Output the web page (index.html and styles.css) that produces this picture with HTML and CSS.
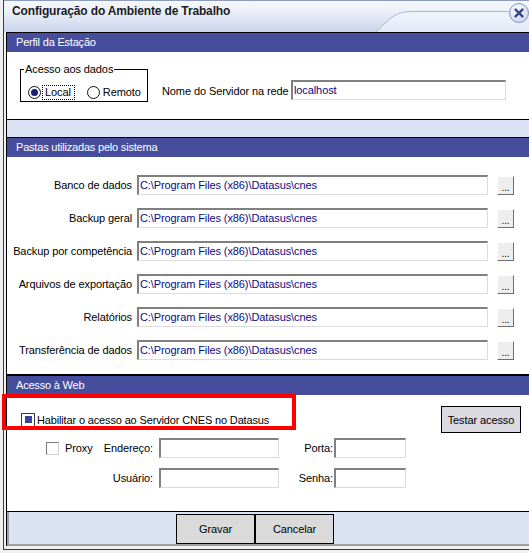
FILE: index.html
```html
<!DOCTYPE html>
<html lang="pt">
<head>
<meta charset="utf-8">
<title>Configuração do Ambiente de Trabalho</title>
<link rel="stylesheet" href="styles.css">
</head>
<body>
<div class="artifact-pink"></div>
<div class="window">
  <div class="titlebar">
    <svg class="tb-curve" width="525" height="31" viewBox="0 0 525 31">
      <defs>
        <linearGradient id="tbr" x1="0" y1="0" x2="0" y2="1">
          <stop offset="0" stop-color="#f1f4fa"/>
          <stop offset="1" stop-color="#e2e8f5"/>
        </linearGradient>
      </defs>
      <path d="M372 31 C 388 14 394 10.5 410 10.5 L 525 10.5 L 525 31 Z" fill="url(#tbr)" stroke="none"/>
      <path d="M372 31 C 388 14 394 10.5 410 10.5 L 505 10.5" fill="none" stroke="#a9b7d6" stroke-width="1"/>
    </svg>
    <span class="title">Configuração do Ambiente de Trabalho</span>
    <svg class="close" width="22" height="22" viewBox="0 0 22 22">
      <defs>
        <radialGradient id="cbg" cx="0.4" cy="0.35" r="0.7">
          <stop offset="0" stop-color="#ffffff"/>
          <stop offset="1" stop-color="#c9d4ec"/>
        </radialGradient>
      </defs>
      <circle cx="11" cy="11" r="9.5" fill="url(#cbg)" stroke="#8594c4" stroke-width="1"/>
      <path d="M7.6 7.6 L14.4 14.4 M14.4 7.6 L7.6 14.4" stroke="#34468a" stroke-width="2.4" stroke-linecap="round"/>
    </svg>
  </div>
  <div class="frame">
    <div class="content">
      <section class="panel">
        <div class="phead">Perfil da Estação</div>
        <div class="pbody p1">
          <div class="group">
            <span class="legend">Acesso aos dados</span>
            <span class="radio on"></span>
            <span class="focus">Local</span>
            <span class="radio r2"></span>
            <span class="rlabel">Remoto</span>
          </div>
          <span class="srv-label">Nome do Servidor na rede</span>
          <div class="input srv">localhost</div>
        </div>
      </section>
      <div class="gap"></div>
      <section class="panel">
        <div class="phead">Pastas utilizadas pelo sistema</div>
        <div class="pbody p2">
          <div class="row"><span class="plabel">Banco de dados</span><div class="input path">C:\Program Files (x86)\Datasus\cnes</div><span class="dots">...</span></div>
          <div class="row"><span class="plabel">Backup geral</span><div class="input path">C:\Program Files (x86)\Datasus\cnes</div><span class="dots">...</span></div>
          <div class="row"><span class="plabel">Backup por competência</span><div class="input path">C:\Program Files (x86)\Datasus\cnes</div><span class="dots">...</span></div>
          <div class="row"><span class="plabel">Arquivos de exportação</span><div class="input path">C:\Program Files (x86)\Datasus\cnes</div><span class="dots">...</span></div>
          <div class="row"><span class="plabel">Relatórios</span><div class="input path">C:\Program Files (x86)\Datasus\cnes</div><span class="dots">...</span></div>
          <div class="row"><span class="plabel">Transferência de dados</span><div class="input path">C:\Program Files (x86)\Datasus\cnes</div><span class="dots">...</span></div>
        </div>
      </section>
      <section class="panel p3panel">
        <div class="phead">Acesso à Web</div>
        <div class="pbody p3">
          <div class="highlight"></div>
          <div class="rowa">
            <span class="check on"><span class="mark"></span></span>
            <span class="check-label">Habilitar o acesso ao Servidor CNES no Datasus</span>
            <span class="btn testar">Testar acesso</span>
          </div>
          <div class="rowb">
            <div class="first">
              <span class="check off"></span>
              <span class="proxy">Proxy</span>
              <span class="endereco">Endereço:</span>
            </div>
            <div class="input wide"></div>
            <span class="lbl54">Porta:</span>
            <div class="input narrow"></div>
          </div>
          <div class="rowc">
            <span class="lbl146">Usuário:</span>
            <div class="input wide"></div>
            <span class="lbl54">Senha:</span>
            <div class="input narrow"></div>
          </div>
        </div>
      </section>
      <div class="footer">
        <span class="btn fbtn">Gravar</span><span class="btn fbtn">Cancelar</span>
      </div>
    </div>
  </div>
</div>
</body>
</html>
```

FILE: styles.css
```css
* { box-sizing: border-box; }
html, body { margin: 0; padding: 0; }
body {
  width: 529px;
  height: 553px;
  overflow: hidden;
  background: #f0f0f0;
  font-family: "Liberation Sans", Arial, sans-serif;
  font-size: 11px;
  letter-spacing: -0.1px;
  color: #000;
  position: relative;
}
.artifact-pink {
  position: absolute;
  left: 460px; top: 0;
  width: 16px; height: 3px;
  background: #ff00ff;
}
.window {
  margin-left: 3px;
  width: 526px;
  height: 550px;
  border-left: 1px solid #3c3c3c;
  border-bottom: 1px solid #3c3c3c;
}
.titlebar {
  position: relative;
  height: 32px;
  border-top: 1px solid #8e9dbf;
  background: linear-gradient(#f6f8fc 0%, #ebf0f8 35%, #c9d4ec 100%);
  padding: 3px 0 0 8px;
}
.tb-curve { position: absolute; left: 0; top: 0; }
.title {
  position: relative;
  font-weight: bold;
  font-size: 12px;
  letter-spacing: -0.15px;
  color: #1c1c26;
  line-height: 14px;
}
.close { position: absolute; left: 504px; top: 1px; }
.frame { padding-left: 2px; padding-bottom: 3px; }
.content {
  border-left: 1px solid #000;
  background: #dae2f3;
}
.panel {
  background: #fff;
  border-top: 1px solid #000;
  border-bottom: 1px solid #000;
}
.phead {
  height: 19px;
  line-height: 19px;
  background: #464d9d;
  color: #fff;
  padding-left: 9px;
  font-size: 11px;
  letter-spacing: -0.2px;
}
.gap { height: 17px; }

/* panel 1 */
.p1 {
  height: 67px;
  display: flex;
  align-items: flex-start;
}
.group {
  position: relative;
  margin: 17px 0 0 13px;
  width: 128px;
  height: 33px;
  border: 1px solid #000;
  display: flex;
  align-items: center;
  padding: 13px 0 0 7px;
}
.legend {
  position: absolute;
  left: 3px;
  top: -8px;
  padding: 0 1px;
  background: #fff;
  line-height: 14px;
}
.radio {
  width: 13px; height: 13px;
  border: 1px solid #111;
  border-radius: 50%;
  background: #fff;
  flex: none;
  display: flex;
  align-items: center;
  justify-content: center;
}
.radio.on::after {
  content: "";
  width: 7px; height: 7px;
  border-radius: 50%;
  background: #1b1f78;
}
.focus {
  margin-left: 1px;
  border: 1px dotted #000;
  padding: 0 3px 0 2px;
  line-height: 13px;
}
.radio.r2 { margin-left: 12px; }
.rlabel { margin-left: 3px; line-height: 13px; }
.srv-label {
  margin: 32px 0 0 14px;
  width: 124px;
  white-space: nowrap;
  line-height: 14px;
}
.input {
  height: 20px;
  background: #fff;
  border-top: 2px solid #808080;
  border-left: 2px solid #808080;
  border-right: 1px solid #dcdcdc;
  border-bottom: 1px solid #dcdcdc;
  color: #0a0a86;
  padding-left: 1px;
  line-height: 17px;
  white-space: nowrap;
  overflow: hidden;
}
.srv {
  margin: 28px 0 0 5px;
  width: 215px;
}

/* panel 2 */
.p2 {
  height: 217px;
  padding-top: 18px;
  display: flex;
  flex-direction: column;
  gap: 13px;
}
.row {
  display: flex;
  align-items: flex-start;
  height: 20px;
}
.plabel {
  width: 125px;
  text-align: right;
  white-space: nowrap;
  line-height: 21px;
}
.path { margin-left: 5px; width: 351px; }
.dots {
  margin: 1px 0 0 9px;
  width: 17px;
  height: 19px;
  background: #eeeeee;
  border-top: 1px solid #fff;
  border-left: 1px solid #fff;
  border-right: 1px solid #6e6e6e;
  border-bottom: 1px solid #6e6e6e;
  font-size: 10px;
  line-height: 22px;
  text-align: center;
  overflow: hidden;
}

/* panel 3 */
.p3 {
  position: relative;
  height: 116px;
  padding-top: 11px;
}
.highlight {
  position: absolute;
  left: -5px;
  top: -1px;
  width: 294px;
  height: 36px;
  border: 4px solid #ff0000;
}
.rowa {
  display: flex;
  align-items: center;
  height: 27px;
}
.check {
  flex: none;
  width: 14px; height: 14px;
  background: #fff;
  display: flex;
  align-items: center;
  justify-content: center;
}
.check.on {
  margin-left: 14px;
  border: 1px solid #3a3a3a;
}
.check.on .mark {
  width: 7px; height: 7px;
  background: #3d4199;
}
.check-label { margin-left: 2px; white-space: nowrap; letter-spacing: -0.15px; }
.btn {
  display: flex;
  align-items: center;
  justify-content: center;
  border: 1px solid #000;
  background: #dadae0;
  white-space: nowrap;
}
.testar {
  margin-left: auto;
  margin-right: 8px;
  width: 80px;
  height: 27px;
}
.rowb, .rowc {
  display: flex;
  align-items: center;
  height: 20px;
}
.rowb { margin-top: 5px; }
.rowc { margin-top: 10px; }
.first {
  width: 146px;
  display: flex;
  align-items: center;
}
.check.off {
  margin-left: 39px;
  width: 13px; height: 13px;
  border-top: 1px solid #7a7a7a;
  border-left: 1px solid #7a7a7a;
  border-right: 1px solid #d0d0d0;
  border-bottom: 1px solid #d0d0d0;
}
.proxy { margin-left: 6px; }
.endereco { margin-left: auto; }
.wide { margin-left: 6px; width: 120px; }
.narrow { margin-left: 1px; width: 72px; }
.lbl54 { width: 54px; text-align: right; }
.lbl146 { width: 146px; text-align: right; }

/* footer */
.footer {
  height: 34px;
  border-left: 2px solid #a0a0a0;
  border-bottom: 2px solid #a0a0a0;
  padding: 2px 0 0 167px;
  display: flex;
  align-items: flex-start;
}
.fbtn {
  width: 79px;
  height: 30px;
  background: #dadada;
}
```
